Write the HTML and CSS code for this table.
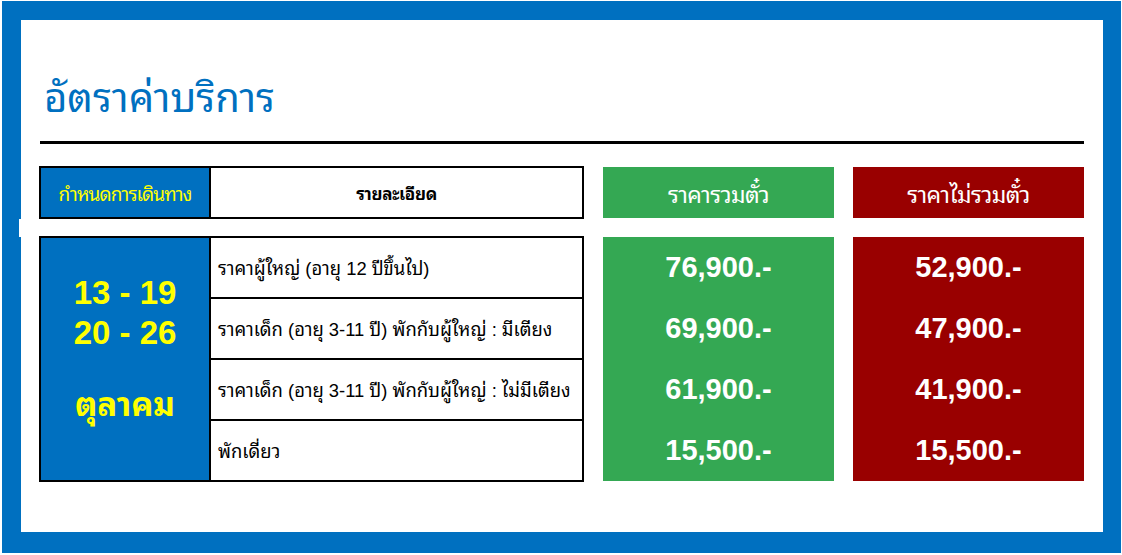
FILE: index.html
```html
<!DOCTYPE html>
<html lang="th">
<head>
<meta charset="utf-8">
<title>อัตราค่าบริการ</title>
<link rel="stylesheet" href="styles.css">
</head>
<body>
<div class="frame">
  <div class="notch"></div>
  <div class="panel">
    <h1 class="title">อัตราค่าบริการ</h1>
    <div class="rule"></div>
    <div class="rates">
      <div class="tbl head-tbl">
        <div class="date-cell head-date">กำหนดการเดินทาง</div>
        <div class="head-detail">รายละเอียด</div>
      </div>
      <div class="box green head-box">ราคารวมตั๋ว</div>
      <div class="box red head-box">ราคาไม่รวมตั๋ว</div>

      <div class="tbl body-tbl">
        <div class="date-cell dates">
          <div class="date-line">13 - 19</div>
          <div class="date-line">20 - 26</div>
          <div class="date-gap"></div>
          <div class="date-line month">ตุลาคม</div>
        </div>
        <div class="rows">
          <div class="row">ราคาผู้ใหญ่ (อายุ 12 ปีขึ้นไป)</div>
          <div class="row">ราคาเด็ก (อายุ 3-11 ปี) พักกับผู้ใหญ่ : มีเตียง</div>
          <div class="row">ราคาเด็ก (อายุ 3-11 ปี) พักกับผู้ใหญ่ : ไม่มีเตียง</div>
          <div class="row">พักเดี่ยว</div>
        </div>
      </div>
      <div class="box green body-box">
        <div class="price">76,900.-</div>
        <div class="price">69,900.-</div>
        <div class="price">61,900.-</div>
        <div class="price">15,500.-</div>
      </div>
      <div class="box red body-box">
        <div class="price">52,900.-</div>
        <div class="price">47,900.-</div>
        <div class="price">41,900.-</div>
        <div class="price">15,500.-</div>
      </div>
    </div>
  </div>
</div>
</body>
</html>
```

FILE: styles.css
```css
* { box-sizing: border-box; }

html, body {
  margin: 0;
  padding: 0;
  background: #ffffff;
}

body {
  font-family: "Liberation Sans", "Noto Sans Thai Looped", "Noto Looped Thai", "Loma", "Garuda", "Tahoma", "Noto Sans Thai", sans-serif;
  color: #000;
}

.frame {
  position: relative;
  margin: 1px 1px 2px 2px;
  height: 552px;
  border-style: solid;
  border-color: #0070c0;
  border-width: 19px 18px 21px 19px;
  background: #fff;
}

.notch {
  position: absolute;
  left: -2px;
  top: 199px;
  width: 2px;
  height: 18px;
  background: #fff;
}

.panel {
  padding: 56px 19px 0 18px;
}

.title {
  margin: 0 0 0 5px;
  height: 44px;
  font-size: 40px;
  line-height: 44px;
  font-weight: normal;
  color: #0070c0;
}

.rule {
  margin: 21px 0 0 1px;
  height: 3px;
  background: #000;
}

.rates {
  margin-top: 22px;
  display: grid;
  grid-template-columns: 545px 231px 231px;
  grid-template-rows: 53px 246px;
  column-gap: 19px;
  row-gap: 17px;
}

.tbl {
  border: 2px solid #000;
  display: grid;
  grid-template-columns: 170px 1fr;
}

.date-cell {
  background: #0070c0;
  border-right: 2px solid #000;
  color: #ffff00;
}

.head-date {
  display: flex;
  align-items: center;
  justify-content: center;
  font-size: 19px;
  letter-spacing: -0.9px;
}

.head-detail {
  display: flex;
  align-items: center;
  justify-content: center;
  font-size: 17px;
  font-weight: bold;
  letter-spacing: -0.3px;
}

.box {
  color: #fff;
}

.green { background: #34a853; }
.red { background: #990000; }

.head-box {
  margin: 1px 0;
  display: flex;
  align-items: center;
  justify-content: center;
  font-size: 23px;
  letter-spacing: -0.6px;
}

.body-box {
  margin: 1px 0 1px 0;
  display: grid;
  grid-template-rows: repeat(4, 1fr);
}

.price {
  display: flex;
  align-items: center;
  justify-content: center;
  font-size: 29px;
  font-weight: bold;
}

.dates {
  padding-top: 35px;
  display: flex;
  flex-direction: column;
  align-items: center;
  font-weight: bold;
  font-size: 33px;
}

.date-line {
  line-height: 40px;
  height: 40px;
}

.date-gap {
  height: 32px;
}

.rows {
  display: grid;
  grid-template-rows: repeat(4, 1fr);
  row-gap: 2px;
  background: #000;
}

.row {
  background: #fff;
  display: flex;
  align-items: center;
  padding: 0 0 3px 7px;
  font-size: 18.4px;
}
```
